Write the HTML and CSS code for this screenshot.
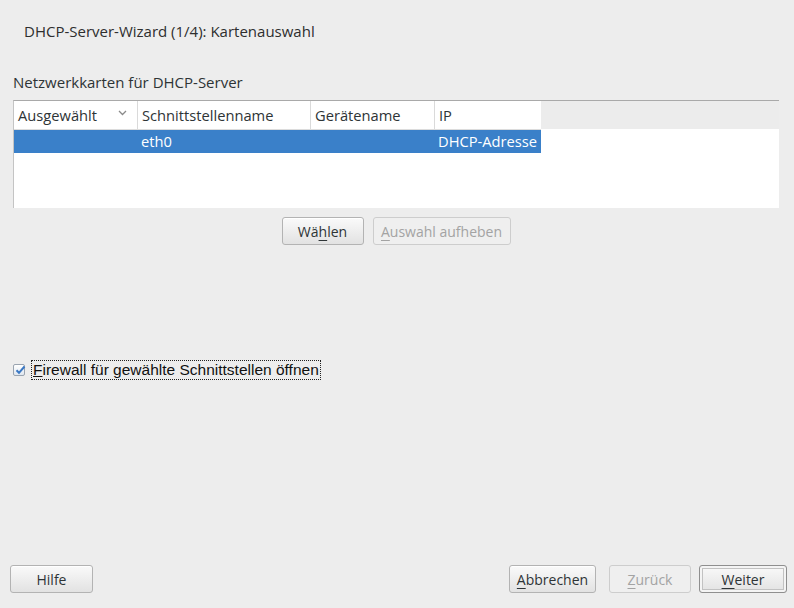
FILE: index.html
```html
<!DOCTYPE html>
<html lang="de">
<head>
<meta charset="utf-8">
<title>DHCP-Server-Wizard</title>
<link rel="stylesheet" href="styles.css">
</head>
<body>
<div class="window">
  <h1 class="title">DHCP-Server-Wizard (1/4): Kartenauswahl</h1>
  <div class="content">
    <div class="label">Netzwerkkarten für DHCP-Server</div>
    <div class="table">
      <div class="row head">
        <div class="cell c1">Ausgewählt <svg class="chev" width="9" height="6" viewBox="0 0 9 6"><path d="M1 1 L4.5 4.5 L8 1" fill="none" stroke="#8a8a8a" stroke-width="1.3"/></svg></div>
        <div class="cell c2">Schnittstellenname</div>
        <div class="cell c3">Gerätename</div>
        <div class="cell c4">IP</div>
      </div>
      <div class="row sel">
        <div class="cell c1"></div>
        <div class="cell c2">eth0</div>
        <div class="cell c3"></div>
        <div class="cell c4">DHCP-Adresse</div>
      </div>
    </div>
    <div class="btnrow">
      <button class="btn">Wä<u>h</u>len</button>
      <button class="btn disabled"><u>A</u>uswahl aufheben</button>
    </div>
    <div class="spacer"></div>
    <label class="check">
      <span class="box"><svg width="12" height="12" viewBox="0 0 12 12"><path d="M2.5 6.2 L5 8.8 L10.5 2.5" fill="none" stroke="#3a78c4" stroke-width="2"/></svg></span>
      <span class="focus"><u>F</u>irewall für gewählte Schnittstellen öffnen</span>
    </label>
  </div>
  <div class="footer">
    <button class="btn help">Hilfe</button>
    <div class="right">
      <button class="btn w87"><u>A</u>bbrechen</button>
      <button class="btn disabled w82"><u>Z</u>urück</button>
      <button class="btn default w88"><u>W</u>eiter</button>
    </div>
  </div>
</div>
</body>
</html>
```
FILE: styles.css
```css
* { box-sizing: border-box; }
html, body { margin: 0; padding: 0; }
body {
  background: #ededed;
  font-family: "Open Sans", "DejaVu Sans", sans-serif;
  font-size: 15px;
  color: #2e3436;
}
.window {
  width: 794px;
  height: 608px;
  display: flex;
  flex-direction: column;
}
.title {
  margin: 0;
  padding: 21px 0 0 24px;
  height: 72px;
  font-size: 15px;
  font-weight: normal;
  line-height: 20px;
  color: #2e2e2e;
}
.content {
  flex: 1;
  padding: 0 15px 0 13px;
  display: flex;
  flex-direction: column;
}
.label {
  height: 28px;
  line-height: 20px;
}
.table {
  height: 108px;
  background: #fff;
  border-top: 1px solid #a9a9a9;
  border-left: 1px solid #c4c4c4;
  font-size: 14.7px;
}
.row {
  display: flex;
  width: 527px;
}
.head {
  height: 29px;
  border-bottom: 1px solid #dcdcdc;
  background: #fff;
  position: relative;
}
.head::after {
  content: "";
  position: absolute;
  left: 527px;
  top: 0;
  width: 238px;
  height: 28px;
  background: #ececec;
}
.cell {
  padding-left: 4px;
  line-height: 28px;
  white-space: nowrap;
}
.head .cell + .cell { border-left: 1px solid #dadada; }
.c1 { width: 123px; display: flex; align-items: center; justify-content: space-between; padding-right: 10px; }
.c2 { width: 173px; }
.c3 { width: 124px; }
.c4 { width: 107px; }
.sel .cell + .cell { border-left: 1px solid transparent; }
.sel .c2 { padding-left: 3px; }
.sel .c4 { padding-left: 3px; }
.sel {
  height: 23px;
  background: #3a80c9;
  color: #fff;
}
.sel .cell { line-height: 23px; }
.chev { margin-top: -4px; }
.btnrow {
  display: flex;
  justify-content: center;
  gap: 9px;
  padding-top: 9px;
}
.btn {
  font-family: inherit;
  font-size: 14px;
  color: #2e3436;
  height: 28px;
  padding: 0;
  white-space: nowrap;
  border: 1px solid #b3b3b3;
  border-radius: 3px;
  background: linear-gradient(#fafafa, #e2e2e2);
  box-shadow: inset 0 1px 0 #fff;
}
.btnrow .btn:first-child { width: 82px; }
.btnrow .btn.disabled { width: 138px; }
.btn u { text-decoration-thickness: 1px; text-underline-offset: 3px; }
.btn.disabled {
  background: #efefef;
  border-color: #cdcdcd;
  color: #a3a3a3;
  box-shadow: none;
}
.spacer { height: 115px; }
.check {
  display: flex;
  align-items: center;
  height: 20px;
  font-family: "Liberation Sans", Arial, sans-serif;
  font-size: 15.5px;
  color: #111;
}
.box {
  width: 12px;
  height: 12px;
  border: 1px solid #9aa4b0;
  border-radius: 2px;
  background: linear-gradient(#fff, #dfe6ef);
  position: relative;
  margin-right: 6px;
}
.box svg { position: absolute; left: 0; top: -1px; }
.focus {
  border: 1px dotted #222;
  padding: 0 1px;
  line-height: 18px;
}
.footer {
  display: flex;
  justify-content: space-between;
  padding: 0 7px 15px 10px;
}
.help { width: 83px; }
.right { display: flex; gap: 13px; }
.right .btn.disabled { margin-right: -5px; }
.w87 { width: 87px; }
.w82 { width: 82px; }
.w88 { width: 88px; }
.btn.default {
  border: 1px solid #8f8f8f;
  box-shadow: inset 0 0 0 2px #f4f4f4, inset 0 0 0 3px #c2c2c2;
}
```
